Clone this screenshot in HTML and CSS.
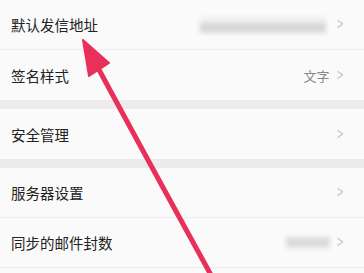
FILE: index.html
```html
<!DOCTYPE html>
<html lang="zh-CN">
<head>
  <meta charset="UTF-8">
  <meta name="viewport" content="width=device-width, initial-scale=1.0">
  <title>邮箱设置</title>
  <link rel="stylesheet" href="styles.css">
</head>
<body>
  <div class="settings">
    <div class="group">
      <div class="row">
        <span class="label">默认发信地址</span>
        <span class="value"><span class="blur blur-mail"></span><span class="chev">&gt;</span></span>
      </div>
      <div class="row">
        <span class="label">签名样式</span>
        <span class="value"><span class="hint">文字</span><span class="chev">&gt;</span></span>
      </div>
    </div>
    <div class="group">
      <div class="row">
        <span class="label">安全管理</span>
        <span class="value"><span class="chev">&gt;</span></span>
      </div>
    </div>
    <div class="group">
      <div class="row">
        <span class="label">服务器设置</span>
        <span class="value"><span class="chev">&gt;</span></span>
      </div>
      <div class="row">
        <span class="label">同步的邮件封数</span>
        <span class="value"><span class="blur blur-num"></span><span class="chev">&gt;</span></span>
      </div>
    </div>
  </div>

  <!-- 红色箭头 -->
  <svg class="arrow" width="364" height="273" viewBox="0 0 364 273">
    <path d="M97 66 Q145 155 211 275" fill="none" stroke="#e8305a" stroke-width="5" stroke-linecap="round"/>
    <polygon points="83,40 109,63 89,76" fill="#e8305a" stroke="#e8305a" stroke-width="2" stroke-linejoin="round"/>
  </svg>
</body>
</html>
```

FILE: styles.css
```css
* {
  margin: 0;
  padding: 0;
  box-sizing: border-box;
}

body {
  width: 364px;
  height: 273px;
  overflow: hidden;
  background: #fafafa;
  font-family: "Noto Sans CJK SC", "Noto Sans", sans-serif;
  position: relative;
}

.settings {
  display: flex;
  flex-direction: column;
  gap: 9px;
  background: #ececec;
}

.group {
  background: #fafafa;
}

.row {
  height: 50px;
  display: flex;
  align-items: center;
  justify-content: space-between;
  padding: 0 17px 0 11px;
  border-bottom: 1px solid #ececec;
}

.group .row:last-child {
  border-bottom: none;
}

.group:last-child .row:last-child {
  border-bottom: 1px solid #ececec;
}

.label {
  font-size: 14.5px;
  color: #222;
}

.value {
  display: flex;
  align-items: center;
  gap: 8px;
}

.hint {
  font-size: 13px;
  color: #888;
  margin-right: -3px;
}

.chev {
  font-family: "DejaVu Sans", sans-serif;
  font-size: 15px;
  line-height: 1;
  color: #c4c4c4;
  transform: scaleX(0.6);
}

/* 打码的内容 */
.blur {
  display: block;
  background: #dcdcdc;
  filter: blur(2px);
}

.blur-mail {
  width: 126px;
  height: 16px;
  background: linear-gradient(#eeeeee 0 35%, #d8d8d8 35% 100%);
}

.blur-num {
  width: 44px;
  height: 11px;
  margin-right: -4px;
}

.arrow {
  position: absolute;
  top: 0;
  left: 0;
}
```
